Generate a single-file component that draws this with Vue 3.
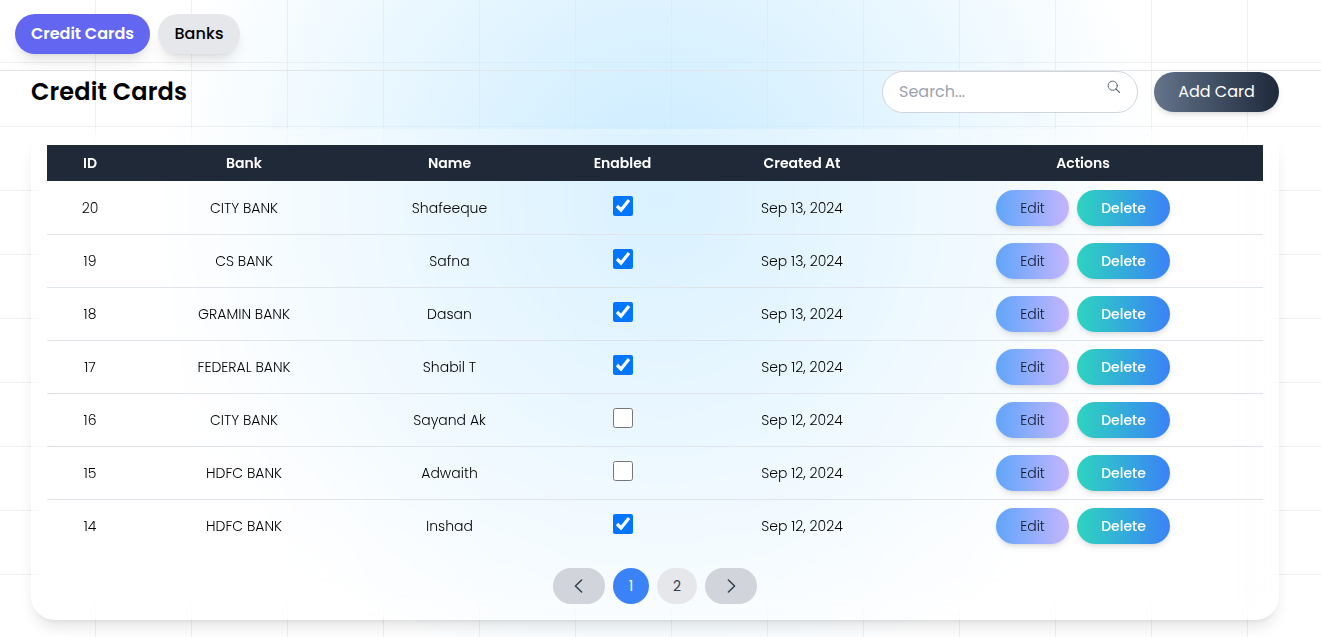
<script setup>
import { ref } from 'vue'

const columns = ['ID', 'Bank', 'Name', 'Enabled', 'Created At', 'Actions']
const cards = ref([
  { id: 20, bank: 'CITY BANK', name: 'Shafeeque', enabled: true, created: 'Sep 13, 2024' },
  { id: 19, bank: 'CS BANK', name: 'Safna', enabled: true, created: 'Sep 13, 2024' },
  { id: 18, bank: 'GRAMIN BANK', name: 'Dasan', enabled: true, created: 'Sep 13, 2024' },
  { id: 17, bank: 'FEDERAL BANK', name: 'Shabil T', enabled: true, created: 'Sep 12, 2024' },
  { id: 16, bank: 'CITY BANK', name: 'Sayand Ak', enabled: false, created: 'Sep 12, 2024' },
  { id: 15, bank: 'HDFC BANK', name: 'Adwaith', enabled: false, created: 'Sep 12, 2024' },
  { id: 14, bank: 'HDFC BANK', name: 'Inshad', enabled: true, created: 'Sep 12, 2024' },
])
const search = ref('')
</script>

<template>
  <div class="page">
    <nav class="tabs">
      <button class="tab active">Credit Cards</button>
      <button class="tab">Banks</button>
    </nav>

    <header class="toolbar">
      <h1>Credit Cards</h1>
      <div class="tools">
        <label class="search">
          <input v-model="search" type="text" placeholder="Search..." />
          <svg width="14" height="14" viewBox="0 0 14 14" fill="none" stroke="#4b5563" stroke-linecap="round">
            <circle cx="5.7" cy="5.7" r="4.6" stroke-width="0.9" />
            <path d="M9.1 9.1 12.6 12.4" stroke-width="1.1" />
          </svg>
        </label>
        <button class="add">Add Card</button>
      </div>
    </header>

    <main class="panel">
      <table>
        <colgroup>
          <col class="c-id" /><col class="c-bank" /><col class="c-name" />
          <col class="c-enabled" /><col class="c-created" /><col />
        </colgroup>
        <thead>
          <tr><th v-for="c in columns" :key="c">{{ c }}</th></tr>
        </thead>
        <tbody>
          <tr v-for="card in cards" :key="card.id">
            <td>{{ card.id }}</td>
            <td>{{ card.bank }}</td>
            <td>{{ card.name }}</td>
            <td><div class="check"><input v-model="card.enabled" type="checkbox" /></div></td>
            <td>{{ card.created }}</td>
            <td>
              <div class="actions">
                <button class="edit">Edit</button>
                <button class="delete">Delete</button>
              </div>
            </td>
          </tr>
        </tbody>
      </table>

      <div class="pager">
        <button class="arrow" aria-label="Previous">
          <svg width="20" height="20" viewBox="0 0 20 20" fill="none" stroke="#374151" stroke-width="1.6" stroke-linecap="round" stroke-linejoin="round"><path d="M12.6 4 6.4 10l6.2 6" /></svg>
        </button>
        <button class="current">1</button>
        <button class="other">2</button>
        <button class="arrow" aria-label="Next">
          <svg width="20" height="20" viewBox="0 0 20 20" fill="none" stroke="#374151" stroke-width="1.6" stroke-linecap="round" stroke-linejoin="round"><path d="m7.4 4 6.2 6-6.2 6" /></svg>
        </button>
      </div>
    </main>
  </div>
</template>

<style>
body {
  margin: 0;
  overflow: hidden;
}
</style>

<style scoped>
.page {
  box-sizing: border-box;
  height: 637px;
  overflow: hidden;
  font-family: Poppins, Inter, 'Liberation Sans', sans-serif;
  color: #000;
  background-color: #fff;
  background-image:
    radial-gradient(circle 500px at 50% 200px, #c9ebff, transparent),
    linear-gradient(to right, #f0f0f0 1px, transparent 1px),
    linear-gradient(to bottom, #f0f0f0 1px, transparent 1px);
  background-size: auto, 96px 64px, 96px 64px;
  background-position: 0 0, 95px 62px, 95px 62px;
}
button {
  border: 0;
  padding: 0;
  font: inherit;
  border-radius: 999px;
}
.tabs {
  display: flex;
  gap: 8px;
  height: 56px;
  padding: 14px 15px 0;
  border-bottom: 1px solid #e2e5e8;
}
.tab {
  height: 40px;
  width: 82px;
  padding-bottom: 2px;
  font-size: 16px;
  font-weight: 500;
  letter-spacing: 0.1px;
  color: #000;
  background: #e5e7eb;
  box-shadow: 0 10px 15px -3px rgba(0, 0, 0, 0.1), 0 4px 6px -4px rgba(0, 0, 0, 0.1);
}
.tab.active {
  width: 135px;
  font-weight: 600;
  letter-spacing: 0;
  color: #fff;
  background: #6366f1;
}
.toolbar {
  display: flex;
  justify-content: space-between;
  align-items: center;
  height: 42px;
  padding: 0 42px 0 31px;
}
h1 {
  margin: 0;
  font-size: 24px;
  line-height: 32px;
  font-weight: 600;
  letter-spacing: 0.12px;
}
.tools {
  display: flex;
  align-items: center;
  gap: 16px;
}
.search {
  box-sizing: border-box;
  display: flex;
  width: 256px;
  height: 42px;
  padding: 0 16px;
  border: 1px solid #d1d5db;
  border-radius: 21px;
  background: #fff;
}
.search input {
  flex: 1;
  min-width: 0;
  padding: 0 0 2px;
  border: 0;
  outline: 0;
  background: transparent;
  font: inherit;
  font-size: 16px;
}
.search input::placeholder {
  color: #9ca3af;
}
.search svg {
  margin-top: 8px;
}
.add {
  width: 125px;
  height: 40px;
  padding-bottom: 2px;
  color: #fff;
  font-size: 16px;
  background: linear-gradient(to right, #64748b, #1e293b);
  box-shadow: 0 4px 6px -1px rgba(0, 0, 0, 0.1), 0 2px 4px -2px rgba(0, 0, 0, 0.1);
}
.panel {
  box-sizing: border-box;
  height: 491px;
  margin: 16px 42px 0 31px;
  padding: 16px;
  border-radius: 24px;
  background: rgba(255, 255, 255, 0.3);
  backdrop-filter: blur(16px);
  box-shadow: 0 10px 15px -3px rgba(0, 0, 0, 0.1), 0 4px 6px -4px rgba(0, 0, 0, 0.1);
}
table {
  width: 100%;
  table-layout: fixed;
  border-collapse: separate;
  border-spacing: 0;
  font-size: 14px;
  line-height: 20px;
  text-align: center;
}
.c-id { width: 86px; }
.c-bank { width: 222px; }
.c-name { width: 189px; }
.c-enabled { width: 157px; }
.c-created { width: 202px; }
th {
  height: 36px;
  padding: 0;
  font-weight: 600;
  color: #fff;
  background: #1f2937;
  background-clip: padding-box;
  border-bottom: 1px solid transparent;
}
td {
  box-sizing: border-box;
  height: 53px;
  padding: 0;
  font-weight: 300;
  color: #000;
  border-bottom: 1px solid #dfe4ea;
}
tbody tr:last-child td {
  border-bottom-color: transparent;
}
.check {
  display: flex;
  justify-content: center;
  padding-bottom: 4px;
}
.check input {
  width: 20px;
  height: 20px;
  margin: 0;
}
.actions {
  display: flex;
  justify-content: center;
  gap: 8px;
}
.actions button {
  height: 36px;
  box-shadow: 0 4px 6px -1px rgba(0, 0, 0, 0.1), 0 2px 4px -2px rgba(0, 0, 0, 0.1);
}
.edit {
  width: 73px;
  color: #0f172a;
  background: linear-gradient(to right, #60a5fa, #c4b5fd);
}
.actions .delete {
  width: 93px;
  font-weight: 500;
  color: #fff;
  background: linear-gradient(to right, #2dd4bf, #3b82f6);
}
.pager {
  display: flex;
  justify-content: center;
  gap: 8px;
  margin-top: 15px;
  font-size: 14px;
}
.pager button {
  display: flex;
  align-items: center;
  justify-content: center;
  height: 36px;
}
.pager .arrow {
  width: 52px;
  background: #d1d5db;
}
.pager .current {
  width: 36px;
  color: #fff;
  background: #3b82f6;
}
.pager .other {
  width: 40px;
  color: #374151;
  background: #e5e7eb;
}
</style>
